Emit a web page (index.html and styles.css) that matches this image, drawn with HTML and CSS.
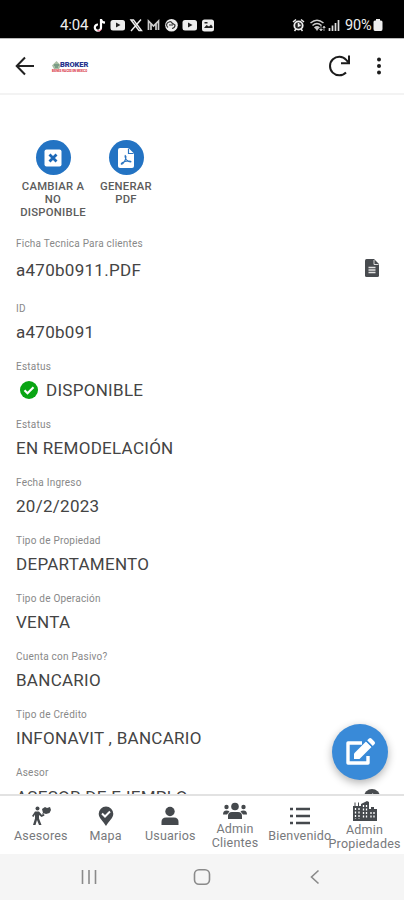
FILE: index.html
```
<!DOCTYPE html>
<html lang="es">
<head>
    <meta charset="UTF-8">
    <meta name="viewport" content="width=device-width, initial-scale=1.0">
    <title>Ficha de propiedad</title>
    <link rel="stylesheet" href="styles.css">
</head>
<body>

    <div class="screen">
        <!-- Barra de estado -->
        <div class="status-bar">
            <span class="clock">4:04</span>
            <svg class="status-icons" width="124" height="16" viewBox="0 0 124 16">
                <path d="M8 2v8.500a3.100 3.100 0 1 1-3-3M8 2.500c.5 2.200 1.800 3 4 3.200" fill="none" stroke="#fff" stroke-width="2.200"/>
                <path d="M4.500 13.500a3 3 0 0 0 4-1" fill="none" stroke="#e8486d" stroke-width=".8"/>
                <rect x="17.500" y="3" width="14.500" height="10.500" rx="2.500" fill="#eee"/>
                <path d="M23 5.500v5l4.500-2.500z" fill="#222"/>
                <path d="M38 3l8 10.500h2.500L40.500 3zM48 2.500L38 14" fill="none" stroke="#eee" stroke-width="1.400"/>
                <path d="M55.500 13V4l5 5 5-5v9M58 13V6M63 13V6" fill="none" stroke="#ccc" stroke-width="1.700"/>
                <circle cx="78.500" cy="8.300" r="6.300" fill="#eee"/>
                <path d="M75 10.500a3 3 0 0 1 1-5.500q2-1 3 1l3 2q0 3-3 3.500M76 8h4" fill="none" stroke="#333" stroke-width="1.200"/>
                <rect x="89.500" y="3" width="14.500" height="10.500" rx="2.500" fill="#eee"/>
                <path d="M95 5.500v5l4.500-2.500z" fill="#222"/>
                <rect x="109" y="2.500" width="12" height="12" rx="2.500" fill="#eee"/>
                <path d="M111 11l2.500-3 2.500 1.500 2-2 1.500 2V11zM111.500 5h3v1.500h-3z" fill="#222"/>
            </svg>
            <svg class="signal" width="50" height="16" viewBox="0 0 50 16">
                <circle cx="6.500" cy="8.500" r="4.200" fill="#222" stroke="#eee" stroke-width="1.800"/>
                <path d="M1 5l3-2.500M12 5L9 2.500M2.500 14l1.500-2M10.500 14L9 12M6.500 6v3l2-1" fill="none" stroke="#eee" stroke-width="1.500"/>
                <path d="M18.500 6q6.500-5.500 13 0M20.500 8.500q4.500-4 9 0M22.500 10.800q2.500-2 5 0" fill="none" stroke="#ccc" stroke-width="1.500"/>
                <path d="M23 10.500h4l-2 3zM29 8v5.500M27.500 12l1.500 2 1.500-2M32 14V9.500M30.800 11L32 9l1.300 2" fill="#ccc" stroke="#ccc" stroke-width=".7"/>
                <path d="M37.500 14v-3M40.500 14V8.500M43.500 14V6M46.500 14V3" stroke="#ddd" stroke-width="1.700"/>
            </svg>
            <span class="battery">90%</span>
            <svg class="battery-icon" width="10" height="14" viewBox="0 0 10 14">
                <path d="M3 1h4v1.500h1q1.500 0 1.500 1.500v7q0 2-1.500 2H2q-1.500 0-1.500-2V4Q.5 2.500 2 2.500h1z" fill="#eee"/>
            </svg>
        </div>

        <!-- Encabezado -->
        <div class="header">
            <svg class="back" width="20" height="20" viewBox="0 0 20 20">
                <path d="M19 10H2M10 1.500L1.700 10l8.300 8.500" fill="none" stroke="#222" stroke-width="2"/>
            </svg>
            <div class="logo">
                <svg width="9" height="9" viewBox="0 0 9 9">
                    <path d="M0 4.500L4.500 0 9 4.500 7 8H2z" fill="#a9bda3"/>
                    <path d="M2 4h5M3 6h3" stroke="#4d7d6a"/>
                </svg>
                <b>BROKER</b>
                <span>BIENES RAICES EN MEXICO</span>
            </div>
            <svg class="reload" width="24" height="24" viewBox="0 0 24 24">
                <path d="M19 18.500a9.300 9.300 0 1 1 .2-12.700L22 9" fill="none" stroke="#1c1c1c" stroke-width="2"/>
                <path d="M22 1.500V9.300h-8" fill="none" stroke="#1c1c1c" stroke-width="2"/>
            </svg>
            <svg class="more" width="6" height="18" viewBox="0 0 6 18">
                <circle cx="3" cy="2.500" r="2"/><circle cx="3" cy="9" r="2"/><circle cx="3" cy="15.500" r="2"/>
            </svg>
        </div>

        <!-- Contenido -->
        <div class="content">
            <div class="actions">
                <div class="action">
                    <div class="action-icon">
                        <svg width="18" height="18" viewBox="0 0 18 18">
                            <rect x=".5" y=".5" width="17" height="17" rx="2" fill="#fff"/>
                            <path d="M5.500 5.500l7 7M12.500 5.500l-7 7" stroke="#1c68b8" stroke-width="2.800"/>
                        </svg>
                    </div>
                    CAMBIAR A NO DISPONIBLE
                </div>
                <div class="action">
                    <div class="action-icon">
                        <svg width="16" height="20" viewBox="0 0 16 20">
                            <path d="M2 0h8.500L16 5.500V18q0 2-2 2H2q-2 0-2-2V2Q0 0 2 0z" fill="#fff"/>
                            <path d="M10.500.5v5h5" fill="none" stroke="#2a75c2" stroke-width="1.200"/>
                            <path d="M7.200 7.500c-1 2 1.800 6.500 5.500 6.500 1.500-1.500-5-1.500-8.700.8-2 2 .5 2 1.600 0C7.500 12 9 8.500 7.200 7.500z" fill="none" stroke="#2a75c2" stroke-width="1.100"/>
                        </svg>
                    </div>
                    GENERAR PDF
                </div>
            </div>

            <div class="field file">
                <div class="label">Ficha Tecnica Para clientes</div>
                <div class="value">a470b0911.PDF
                    <svg width="14" height="18" viewBox="0 0 14 18">
                        <path d="M1.500 0H9l5 5v11.500q0 1.500-1.500 1.500h-11Q0 18 0 16.500v-15Q0 0 1.500 0z" fill="#484b4f"/>
                        <path d="M9 1v4.500h4.500" fill="none" stroke="#ddd"/>
                        <path d="M3.500 8.500h7M3.500 11h7M3.500 13.500h7" stroke="#e4e4e4" stroke-width="1.400"/>
                    </svg>
                </div>
            </div>
            <div class="field">
                <div class="label">ID</div>
                <div class="value">a470b091</div>
            </div>
            <div class="field">
                <div class="label">Estatus</div>
                <div class="value status">
                    <svg width="18" height="18" viewBox="0 0 18 18">
                        <circle cx="9" cy="9" r="9" fill="#0aa514"/>
                        <path d="M4.500 9.200l3 3 6-6" fill="none" stroke="#fff" stroke-width="2.200"/>
                    </svg>DISPONIBLE
                </div>
            </div>
            <div class="field">
                <div class="label">Estatus</div>
                <div class="value">EN REMODELACIÓN</div>
            </div>
            <div class="field">
                <div class="label">Fecha Ingreso</div>
                <div class="value">20/2/2023</div>
            </div>
            <div class="field">
                <div class="label">Tipo de Propiedad</div>
                <div class="value">DEPARTAMENTO</div>
            </div>
            <div class="field">
                <div class="label">Tipo de Operación</div>
                <div class="value">VENTA</div>
            </div>
            <div class="field">
                <div class="label">Cuenta con Pasivo?</div>
                <div class="value">BANCARIO</div>
            </div>
            <div class="field">
                <div class="label">Tipo de Crédito</div>
                <div class="value">INFONAVIT , BANCARIO</div>
            </div>
            <div class="field asesor">
                <div class="label">Asesor</div>
                <div class="value">ASESOR DE EJEMPLO
                    <svg width="16" height="16" viewBox="0 0 16 16">
                        <circle cx="8" cy="8" r="8" fill="#484b4f"/>
                        <path d="M5 8h6M8 5l3 3-3 3" fill="none" stroke="#fff" stroke-width="2"/>
                    </svg>
                </div>
            </div>
            <div class="fab">
                <svg width="32" height="30" viewBox="0 0 32 30">
                    <path d="M18 6H4v20h20v-7" fill="none" stroke="#fff" stroke-width="3.400" stroke-linejoin="round"/>
                    <path d="M10 16.500L22 4.500l5.500 5.500-12 12H10z" fill="#fff"/>
                    <path d="M23.200 3.300l1.800-1.800q1.200-1 2.400 0l3.200 3.200q1 1.200 0 2.400l-1.800 1.800z" fill="#fff"/>
                    <path d="M21.800 3.800l6.400 6.400" stroke="#398ad8" stroke-width="1"/>
                </svg>
            </div>
        </div>

        <!-- Navegación inferior -->
        <div class="bottom-nav">
            <div class="nav-item">
                <svg width="20" height="20" viewBox="0 0 20 20">
                    <circle cx="6.500" cy="2.500" r="2"/>
                    <path d="M4 5.500h4l3 3.500 2-1 .5 1.500-3 1.500-2.500-2v3.500l2.500 6.500H8L6 14l-1.500 5H2l2-6.500V8.500L2.500 11 1 10z"/>
                    <path d="M11 3l3-2 2 1 3-1 1 3-1.500 3-3.500 1-3-1z"/>
                    <path d="M12 7v3" stroke="#45494d"/>
                </svg>
                Asesores
            </div>
            <div class="nav-item">
                <svg width="20" height="20" viewBox="0 0 20 20">
                    <path d="M10 .5a7.300 7.300 0 0 1 7.300 7.300C17.300 12 13 15 10 20 7 15 2.700 12 2.700 7.800A7.300 7.300 0 0 1 10 .5z"/>
                    <path d="M6 7.500l3 3L14 5.500" fill="none" stroke="#fff" stroke-width="2"/>
                </svg>
                Mapa
            </div>
            <div class="nav-item">
                <svg width="20" height="20" viewBox="0 0 20 20">
                    <circle cx="10" cy="5.500" r="4.700"/>
                    <path d="M1.500 19v-3q0-4.500 4.500-4.500h8q4.500 0 4.500 4.500v3z"/>
                </svg>
                Usuarios
            </div>
            <div class="nav-item double">
                <svg width="26" height="18" viewBox="0 0 26 18">
                    <circle cx="13" cy="4.500" r="3.800"/><circle cx="4.500" cy="5" r="2.200"/><circle cx="21.500" cy="5" r="2.200"/>
                    <path d="M6 17v-3q0-4 4-4h6q4 0 4 4v3zM1 12.500q0-4 3.500-4 2 0 3 1L5 12.500zM25 12.500q0-4-3.500-4-2 0-3 1l2.500 3z"/>
                </svg>
                Admin<br>Clientes
            </div>
            <div class="nav-item">
                <svg width="20" height="20" viewBox="0 0 20 20">
                    <path d="M0 3h3M0 10h3M0 17h3M6 3h14M6 10h14M6 17h14" stroke="#45494d" stroke-width="2.500"/>
                </svg>
                Bienvenido
            </div>
            <div class="nav-item double">
                <svg width="26" height="20" viewBox="0 0 26 20">
                    <path d="M1 20V5h1.500V1.500h1V5H6V1.500h1V5h2V3l6-3 2 1v7h2V6h3v2h3v12z"/>
                    <path d="M3.500 7v11M7 7v11M11.500 4v14M14.500 4v14M19 11v7M22 11v7" stroke="#fff" stroke-width="1.300" stroke-dasharray="2 1.500"/>
                </svg>
                Admin<br>Propiedades
            </div>
        </div>

        <!-- Botones del sistema -->
        <div class="system-nav">
            <svg width="16" height="16" viewBox="0 0 16 16"><path d="M1.500 1v14M8 1v14M14.500 1v14"/></svg>
            <svg width="18" height="16" viewBox="0 0 18 16"><rect x="1.500" y=".8" width="15" height="14.400" rx="4.500"/></svg>
            <svg width="10" height="16" viewBox="0 0 10 16"><path d="M8.500 1.500L1.500 8l7 6.500"/></svg>
        </div>
    </div>

</body>
</html>
```
FILE: styles.css
```
/* Estilos globales */
body {
    margin: 0;
    background: #fff;
    font-family: Roboto, Arial, sans-serif;
}

.screen {
    width: 404px;
    height: 900px;
    display: flex;
    flex-direction: column;
    overflow: hidden;
}

svg {
    display: block;
    flex-shrink: 0;
}

/* Barra de estado */
.status-bar {
    height: 38px;
    flex-shrink: 0;
    box-sizing: border-box;
    padding: 12px 21px 0 60px;
    display: flex;
    align-items: center;
    background: #000;
    color: #eee;
    font-size: 15px;
}

.clock {
    width: 31px;
    letter-spacing: -0.2px;
}

.status-icons {
    margin-left: 2px;
}

.signal {
    margin-left: auto;
}

.battery {
    margin-left: 3px;
    width: 27px;
    font-size: 14.5px;
    letter-spacing: -0.2px;
}

.battery-icon {
    margin-left: 1px;
}

/* Encabezado */
.header {
    height: 57px;
    flex-shrink: 0;
    box-sizing: border-box;
    padding: 0 22px 0 15px;
    display: flex;
    align-items: center;
    border-top: 1px solid #bbb;
    border-bottom: 2px solid #f3f3f3;
}

.logo {
    width: 36px;
    margin: 2px 0 0 17px;
    display: grid;
    grid-template-columns: 8px 28px;
    line-height: 8px;
}

.logo b {
    font-size: 7.5px;
    font-weight: 900;
    letter-spacing: -0.1px;
    color: #26338d;
}

.logo span {
    grid-column: 1 / 3;
    height: 3px;
    font-size: 2.8px;
    line-height: 3px;
    font-weight: bold;
    white-space: nowrap;
    color: #d62335;
}

.reload {
    margin-left: auto;
}

.more {
    margin-left: 25px;
    fill: #1c1c1c;
}

/* Contenido */
.content {
    position: relative;
    height: 699px;
    flex-shrink: 0;
    box-sizing: border-box;
    padding: 45px 16px 0;
    overflow: hidden;
}

.actions {
    height: 97px;
    display: flex;
    gap: 1px;
}

.action {
    width: 74px;
    font-size: 11.3px;
    line-height: 13px;
    font-weight: 500;
    text-align: center;
    color: #5c5c5c;
    letter-spacing: 0.25px;
}

.action:last-child {
    width: 70px;
}

.action-icon {
    width: 35px;
    height: 35px;
    margin: 0 auto 5px;
    display: flex;
    align-items: center;
    justify-content: center;
    border-radius: 50%;
    background: #2373c3;
}

.field {
    height: 58px;
}

.label {
    font-size: 10px;
    line-height: 14px;
    color: #888;
    letter-spacing: 0.22px;
}

.value {
    margin-top: 4px;
    display: flex;
    align-items: center;
    justify-content: space-between;
    font-size: 17px;
    line-height: 24px;
    color: #444;
    letter-spacing: 0.28px;
}

.file {
    height: 65px;
}

.file .value {
    margin-top: 7px;
    padding-right: 9px;
}

.file svg {
    margin-top: -4px;
}

.status {
    justify-content: flex-start;
    gap: 8px;
    padding-left: 4px;
}

.asesor .value {
    padding: 1px 8px 0 0;
}

/* Botón flotante de edición */
.fab {
    position: absolute;
    right: 16px;
    bottom: 14px;
    width: 56px;
    height: 56px;
    display: flex;
    align-items: center;
    justify-content: center;
    border-radius: 50%;
    background: #398ad8;
    box-shadow: 0 3px 8px rgba(0, 0, 0, 0.3);
}

/* Navegación inferior */
.bottom-nav {
    height: 60px;
    flex-shrink: 0;
    box-sizing: border-box;
    padding: 0 7px 0 8.5px;
    display: flex;
    border-top: 2px solid #e2e2e2;
}

.nav-item {
    width: 64.8px;
    display: flex;
    flex-direction: column;
    align-items: center;
    justify-content: center;
    font-size: 12.5px;
    line-height: 14.5px;
    text-align: center;
    white-space: nowrap;
    color: #77797c;
    letter-spacing: 0.22px;
}

.nav-item svg {
    margin-bottom: 3px;
    fill: #45494d;
}

.double {
    padding-top: 2px;
}

.double svg {
    margin-bottom: 2px;
}

/* Botones del sistema */
.system-nav {
    flex: 1;
    padding: 0 84px 0 81px;
    display: flex;
    align-items: center;
    gap: 96px;
    background: #f5f5f5;
}

.system-nav svg {
    fill: none;
    stroke: #8a8a8a;
    stroke-width: 1.6;
}

.system-nav svg:last-child {
    margin-left: 3px;
}
```
